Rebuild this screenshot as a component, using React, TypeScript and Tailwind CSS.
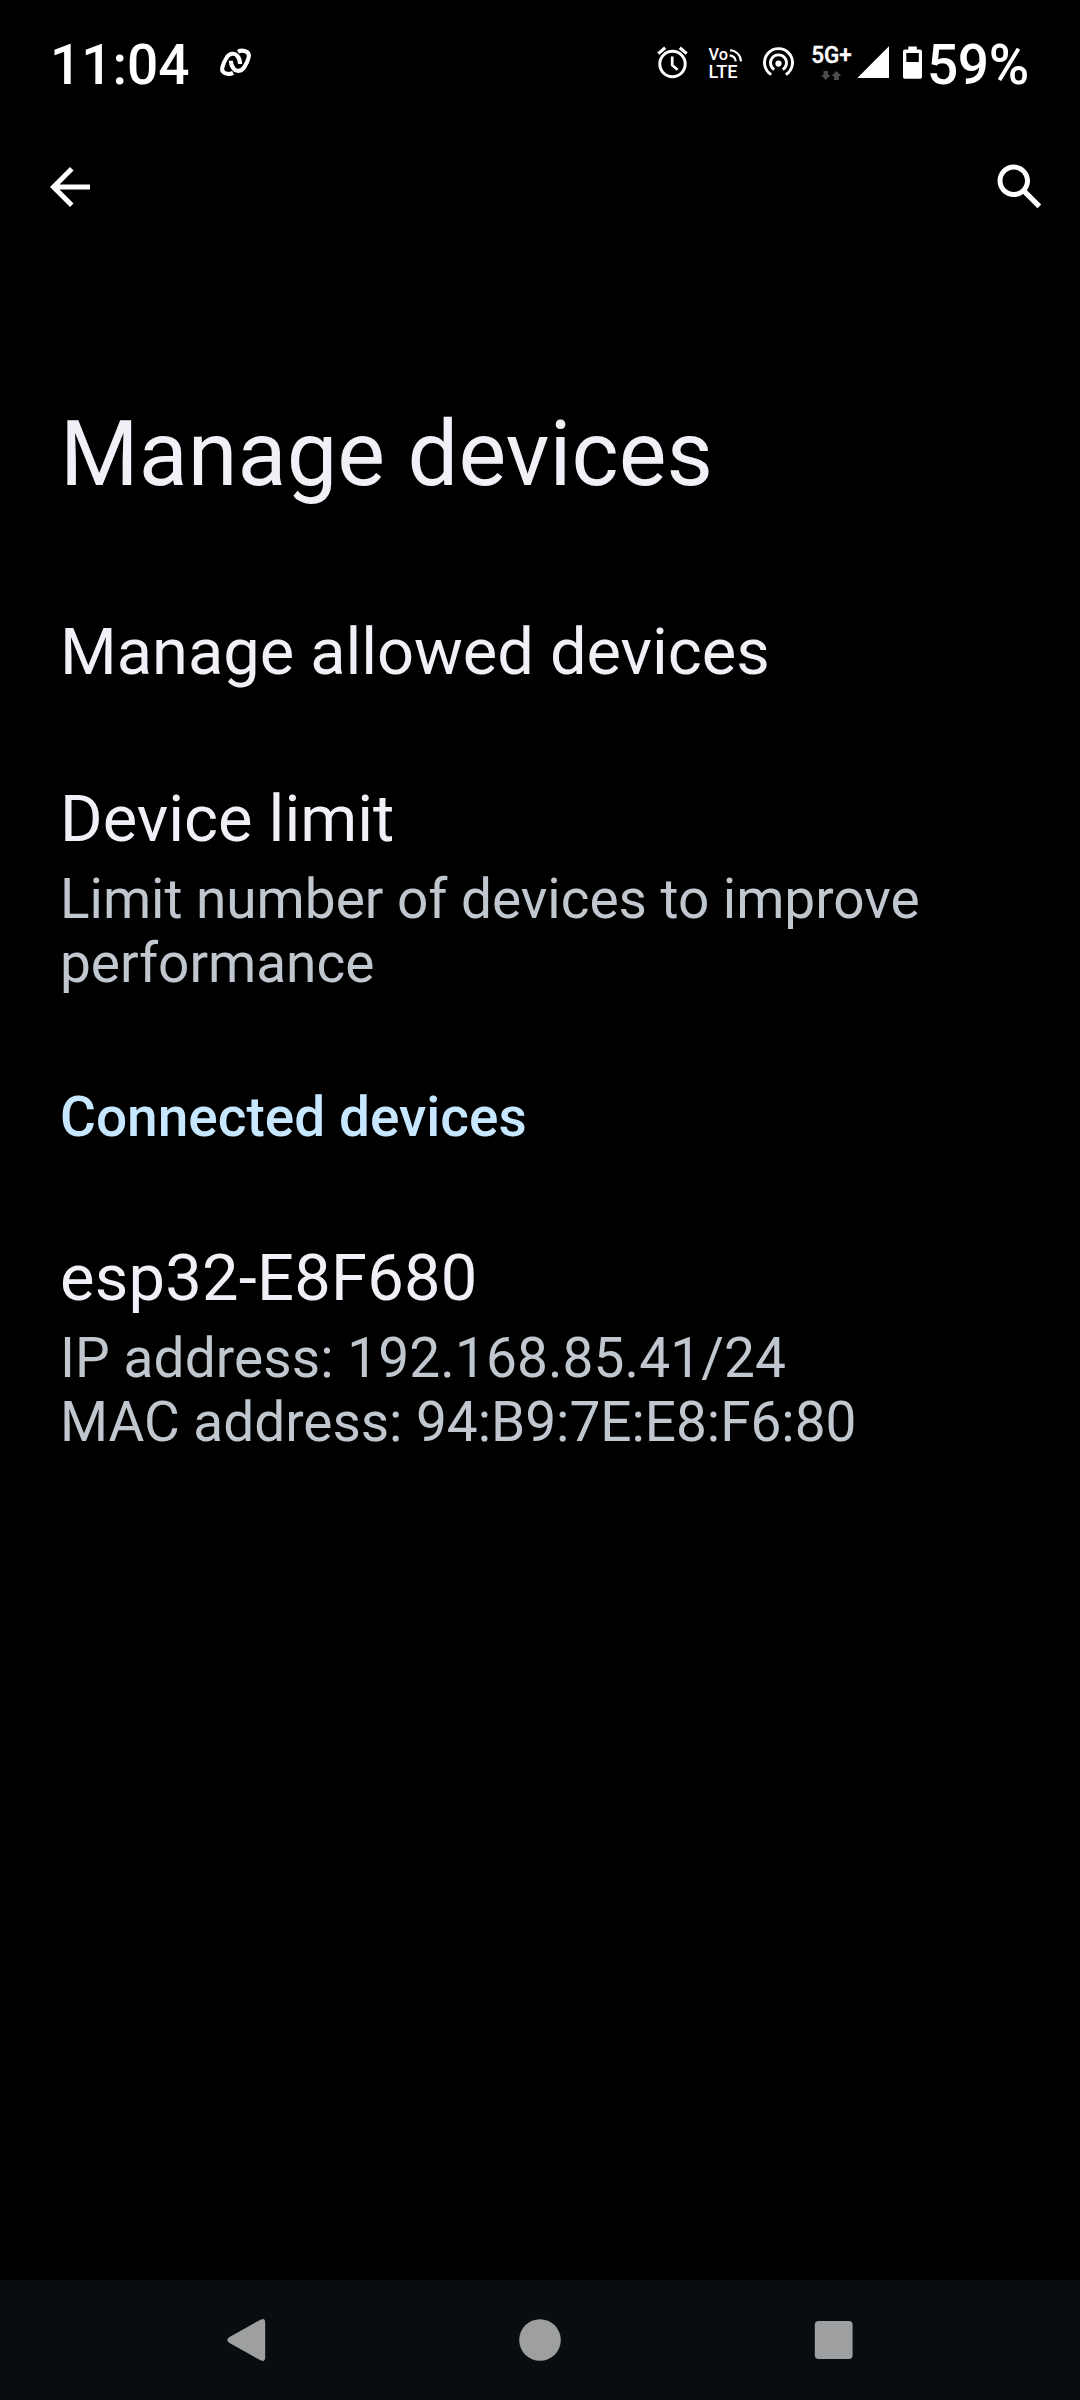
import type { ReactNode } from 'react';

function Glyph({ box, className, children }: { box: string; className: string; children: ReactNode }) {
  return (
    <svg viewBox={box} className={`h-[44px] shrink-0 ${className}`} fill="none" stroke="none">
      {children}
    </svg>
  );
}

const roboto = 'Roboto, sans-serif';

function StatusBar() {
  return (
    <header className="flex h-[124px] items-center pr-[50px] pl-[50px] text-white">
      <span className="w-[140px] pt-[6px] text-[55px] leading-[64px] font-medium">11:04</span>
      <Glyph box="212 40 48 44" className="ml-[22px] w-[48px]">
        <g transform="translate(235.5 62.3)" stroke="#fff" strokeWidth="4.1">
          <path d="M-2.4 10.6C-6.4 12.8 -14.6 11.4 -13.2 5.2C-12.6 2.4 -10.6 -2 -8.8 -4.8C-6 -9.4 -0.6 -9.6 1.8 -6.4C3.6 -4.2 4.6 -1.6 4.6 1.6" />
          <path d="M2.4 -10.6C6.4 -12.8 14.6 -11.4 13.2 -5.2C12.6 -2.4 10.6 2 8.8 4.8C6 9.4 0.6 9.6 -1.8 6.4C-3.6 4.2 -4.6 1.6 -4.6 -1.6" />
        </g>
      </Glyph>
      <div className="ml-auto flex items-center">
        <Glyph box="652 40 52 44" className="w-[52px]">
          <g stroke="#fff">
            <circle cx="672.5" cy="64" r="12.7" strokeWidth="3" />
            <path d="M672.2 56.4V65.2L677.6 69.8" strokeWidth="2.7" />
            <path d="M658.3 53.6L665.2 47.8M686.7 53.6L679.8 47.8" strokeWidth="3.2" />
          </g>
        </Glyph>
        <Glyph box="704 40 54 44" className="w-[54px]">
          <g fill="#fff" fontFamily={roboto} fontWeight="500">
            <text x="708.5" y="60" fontSize="16.5" textLength="19.5" lengthAdjust="spacingAndGlyphs">Vo</text>
            <text x="708.6" y="77.6" fontSize="17.5" textLength="29" lengthAdjust="spacingAndGlyphs">LTE</text>
          </g>
          <g stroke="#fff" strokeWidth="2.1">
            <path d="M730 50.2A11.5 11.5 0 0 1 741 61.4" />
            <path d="M729.6 55.4A7 7 0 0 1 735.8 61.4" />
          </g>
        </Glyph>
        <Glyph box="758 40 48 44" className="w-[48px]">
          <g stroke="#fff" strokeWidth="2.9">
            <path d="M771.2 74.6A14 14 0 1 1 785.8 74.6" />
            <path d="M774.2 69.6A8 8 0 1 1 782.8 69.6" />
          </g>
          <circle cx="778.5" cy="63.6" r="3.1" fill="#fff" />
        </Glyph>
        <Glyph box="806 40 48 44" className="w-[48px]">
          <text x="811.2" y="63.4" fill="#fff" fontFamily={roboto} fontWeight="500" stroke="#fff" strokeWidth="0.4" fontSize="23" textLength="40.5" lengthAdjust="spacingAndGlyphs">5G+</text>
          <path d="M823.5 71H828V75H830.6L825.8 80L821 75H823.5ZM834 80H838.8V76H841.4L836.4 71L831.6 76H834Z" fill="#4d4d4d" />
        </Glyph>
        <Glyph box="854 40 42 44" className="w-[42px]">
          <path d="M857.3 78L889 46.2V78Z" fill="#fff" />
        </Glyph>
        <Glyph box="896 40 31 44" className="w-[31px]">
          <path fillRule="evenodd" clipRule="evenodd" fill="#fff" d="M908.3 46.6H916.8V49.6H920.2A1.8 1.8 0 0 1 922 51.4V77A1.8 1.8 0 0 1 920.2 78.8H904.8A1.8 1.8 0 0 1 903 77V51.4A1.8 1.8 0 0 1 904.8 49.6H908.3ZM906.3 53V62H918.8V53Z" />
        </Glyph>
        <span className="w-[103px] pt-[6px] text-[55px] leading-[64px] font-medium tracking-[-0.4px]">59%</span>
      </div>
    </header>
  );
}

function AppBar() {
  return (
    <nav className="flex h-[126px] items-center justify-between pr-[30px] pl-[40px] text-white">
      <button aria-label="Back">
        <svg viewBox="0 0 24 24" className="size-[60px]" fill="currentColor">
          <path d="M20 11H7.83l5.59-5.59L12 4l-8 8 8 8 1.41-1.41L7.83 13H20v-2z" />
        </svg>
      </button>
      <button aria-label="Search">
        <svg viewBox="0 0 24 24" className="size-[60px]" fill="currentColor">
          <path d="M20.49 19l-5.73-5.73C15.53 12.2 16 10.91 16 9.5 16 5.91 13.09 3 9.5 3S3 5.91 3 9.5 5.91 16 9.5 16c1.41 0 2.7-.47 3.77-1.24L19 20.49 20.49 19zM5 9.5C5 7.01 7.01 5 9.5 5S14 7.01 14 9.5 11.99 14 9.5 14 5 11.99 5 9.5z" />
        </svg>
      </button>
    </nav>
  );
}

function NavigationBar() {
  return (
    <footer className="flex h-[120px] items-center justify-center gap-[243px] bg-[#0a0d0f]">
      <svg viewBox="0 0 50 50" className="size-[50px]" fill="#9e9fa0">
        <path d="M38.5 4.7Q43 2.5 43.2 7.5V42.5Q43 47.5 38.5 45.3L7.5 28Q3 25 7.5 22Z" />
      </svg>
      <svg viewBox="0 0 50 50" className="size-[50px]" fill="#9e9fa0">
        <circle cx="25" cy="25" r="20.8" />
      </svg>
      <svg viewBox="0 0 50 50" className="size-[50px]" fill="#9e9fa0">
        <rect x="6.8" y="6" width="37.8" height="38" rx="4" />
      </svg>
    </footer>
  );
}

export default function App() {
  return (
    <div className="flex h-[2400px] w-[1080px] flex-col overflow-hidden bg-black font-[Roboto,sans-serif]">
      <StatusBar />
      <AppBar />
      <main className="flex-1 px-[60px] text-[#eff1f7]">
        <h1 className="mt-[152px] text-[90px] leading-[106px] tracking-[0.12px]">Manage devices</h1>
        <h2 className="mt-[105px] text-[65px] leading-[78px] tracking-[-0.04px]">Manage allowed devices</h2>
        <section className="mt-[89px]">
          <h2 className="text-[65px] leading-[78px]">Device limit</h2>
          <p className="mt-[9px] text-[55px] leading-[64px] tracking-[-0.04px] text-[#c1c7cf]">
            Limit number of devices to improve
            <br />
            performance
          </p>
        </section>
        <h3 className="mt-[90px] text-[55px] leading-[64px] font-medium text-[#c6e7ff]">Connected devices</h3>
        <section className="mt-[90px]">
          <h2 className="text-[65px] leading-[78px] tracking-[0.25px]">esp32-E8F680</h2>
          <p className="mt-[9px] text-[55px] leading-[64px] text-[#c1c7cf]">
            <span className="tracking-[0.09px]">IP address: 192.168.85.41/24</span>
            <br />
            <span className="tracking-[-0.04px]">MAC address: 94:B9:7E:E8:F6:80</span>
          </p>
        </section>
      </main>
      <NavigationBar />
    </div>
  );
}
